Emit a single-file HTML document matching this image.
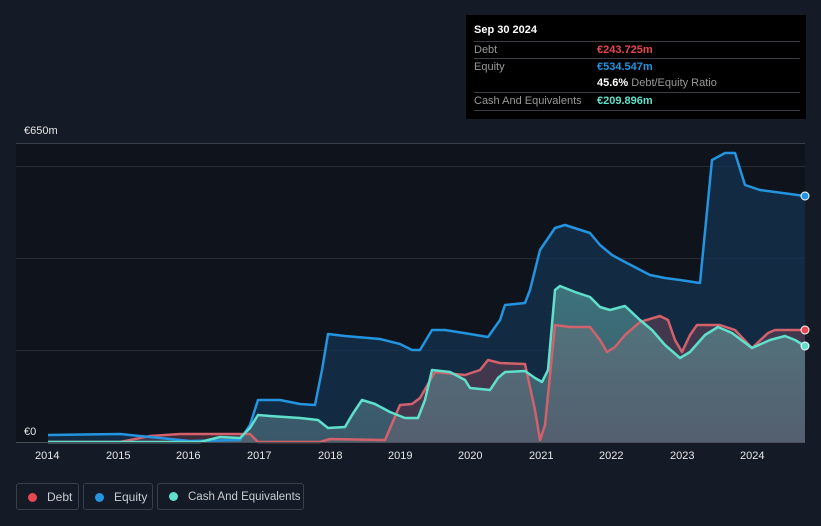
<!DOCTYPE html>
<html><head><meta charset="utf-8"><style>
html,body{margin:0;width:821px;height:526px;overflow:hidden}
body{background:#151b26;font-family:"Liberation Sans",sans-serif;position:relative}
.tt{position:absolute;left:466px;top:15px;width:340px;height:104px;background:#000;color:#fff;font-size:11px}
.tt .r{position:absolute;left:8px;right:6px;border-top:1px solid #3a3d42;height:17px;line-height:17px}
.lg{position:absolute;top:483px;height:27px;border:1px solid #3a404a;border-radius:3px;color:#c9ccd1;font-size:12px;line-height:26px;box-sizing:border-box;white-space:nowrap}
.dot{display:inline-block;width:9px;height:9px;border-radius:50%;margin:0 10px 0 11px;vertical-align:-1px}
.ax{position:absolute;top:450px;color:#e6e6e6;font-size:11px}
</style></head><body>
<svg width="821" height="526" style="position:absolute;left:0;top:0">
<defs>
<linearGradient id="cg" x1="0" y1="0" x2="0" y2="1"><stop offset="0" stop-color="#5fb0aa" stop-opacity=".55"/><stop offset="1" stop-color="#6a8f98" stop-opacity=".45"/></linearGradient>
</defs>
<rect x="16" y="143" width="789" height="299" fill="#0f131b"/>
<line x1="16" y1="143.5" x2="805" y2="143.5" stroke="#3a3f48"/>
<g stroke="#272c35"><line x1="16" y1="166.5" x2="805" y2="166.5"/><line x1="16" y1="258.5" x2="805" y2="258.5"/><line x1="16" y1="350.5" x2="805" y2="350.5"/></g>
<polygon fill="#163352" fill-opacity=".75" points="48,442 48,435 120,434 150,437 190,441 240,440 250,425 258,400 280,400 300,404 315,405 322,370 328,334 345,336 380,339 400,344 412,350 420,350 432,330 445,330 470,334 488,337 500,320 505,305 525,303 530,290 540,250 555,228 565,225 590,233 600,245 612,255 625,262 650,275 665,278 680,280 700,283 712,160 725,153 735,153 745,185 760,190 790,194 805,196 805,442"/>
<polygon fill="#7a4a5a" fill-opacity=".45" points="48,442 120,442 150,436 180,434 250,434 258,442 320,442 330,439 385,440 400,405 412,404 420,398 435,372 465,375 480,370 488,360 500,363 525,364 535,410 540,440 545,425 555,325 570,327 590,327 600,340 607,352 615,347 625,335 640,322 660,316 668,320 675,340 682,352 690,335 697,325 720,325 735,330 752,348 768,333 775,330 805,330 805,442"/>
<polygon fill="url(#cg)" points="48,442 200,442 220,437 240,438 250,428 258,415 270,416 300,418 318,420 328,428 345,427 352,415 362,400 375,404 390,412 405,418 418,418 425,400 432,370 450,372 465,380 470,388 490,390 498,378 505,372 525,371 535,378 542,382 548,370 555,290 560,286 575,292 590,297 600,307 610,310 625,306 640,320 652,330 665,345 680,358 690,352 705,335 718,327 732,333 752,348 770,340 785,336 795,340 805,346 805,442"/>
<g fill="none" stroke-width="2.5" stroke-linejoin="round">
<polyline stroke="#d2616b" points="48,442 120,442 150,436 180,434 250,434 258,442 320,442 330,439 385,440 400,405 412,404 420,398 435,372 465,375 480,370 488,360 500,363 525,364 535,410 540,440 545,425 555,325 570,327 590,327 600,340 607,352 615,347 625,335 640,322 660,316 668,320 675,340 682,352 690,335 697,325 720,325 735,330 752,348 768,333 775,330 805,330"/>
<polyline stroke="#2394e0" points="48,435 120,434 150,437 190,441 240,440 250,425 258,400 280,400 300,404 315,405 322,370 328,334 345,336 380,339 400,344 412,350 420,350 432,330 445,330 470,334 488,337 500,320 505,305 525,303 530,290 540,250 555,228 565,225 590,233 600,245 612,255 625,262 650,275 665,278 680,280 700,283 712,160 725,153 735,153 745,185 760,190 790,194 805,196"/>
<polyline stroke="#5fe0cc" points="48,442 200,442 220,437 240,438 250,428 258,415 270,416 300,418 318,420 328,428 345,427 352,415 362,400 375,404 390,412 405,418 418,418 425,400 432,370 450,372 465,380 470,388 490,390 498,378 505,372 525,371 535,378 542,382 548,370 555,290 560,286 575,292 590,297 600,307 610,310 625,306 640,320 652,330 665,345 680,358 690,352 705,335 718,327 732,333 752,348 770,340 785,336 795,340 805,346"/>
</g>
<line x1="16" y1="442.5" x2="805" y2="442.5" stroke="#4a4f58"/>
<circle cx="805" cy="196" r="4" fill="#2394e0" stroke="#fff"/>
<circle cx="805" cy="330" r="4" fill="#e84850" stroke="#fff"/>
<circle cx="805" cy="346" r="4" fill="#5fe0cc" stroke="#fff"/>
</svg>
<div style="position:absolute;left:24px;top:125px;color:#e6e6e6;font-size:11px">€650m</div>
<div style="position:absolute;left:24px;top:426px;color:#e6e6e6;font-size:11px">€0</div>
<div class="ax" style="left:35px">2014</div><div class="ax" style="left:106px">2015</div><div class="ax" style="left:176px">2016</div><div class="ax" style="left:247px">2017</div><div class="ax" style="left:318px">2018</div><div class="ax" style="left:388px">2019</div><div class="ax" style="left:458px">2020</div><div class="ax" style="left:529px">2021</div><div class="ax" style="left:599px">2022</div><div class="ax" style="left:670px">2023</div><div class="ax" style="left:740px">2024</div>
<div class="tt">
<div style="position:absolute;left:8px;top:9px;font-size:11px;font-weight:bold">Sep 30 2024</div>
<div class="r" style="top:26px"><span style="color:#999">Debt</span><span style="position:absolute;left:123px;color:#e84850;font-weight:bold">€243.725m</span></div>
<div class="r" style="top:43px"><span style="color:#999">Equity</span><span style="position:absolute;left:123px;color:#2394e0;font-weight:bold">€534.547m</span></div>
<div class="r" style="top:60px;border:none"><span style="position:absolute;left:123px"><b>45.6%</b> <span style="color:#999">Debt/Equity Ratio</span></span></div>
<div class="r" style="top:77px;border-bottom:1px solid #3a3d42"><span style="color:#999">Cash And Equivalents</span><span style="position:absolute;left:123px;color:#5fe0cc;font-weight:bold">€209.896m</span></div>
</div>
<div class="lg" style="left:16px;width:63px"><span class="dot" style="background:#e84850"></span>Debt</div>
<div class="lg" style="left:83px;width:70px"><span class="dot" style="background:#2394e0"></span>Equity</div>
<div class="lg" style="left:157px;width:147px;font-size:11.5px"><span class="dot" style="background:#5fe0cc"></span>Cash And Equivalents</div>
</body></html>
